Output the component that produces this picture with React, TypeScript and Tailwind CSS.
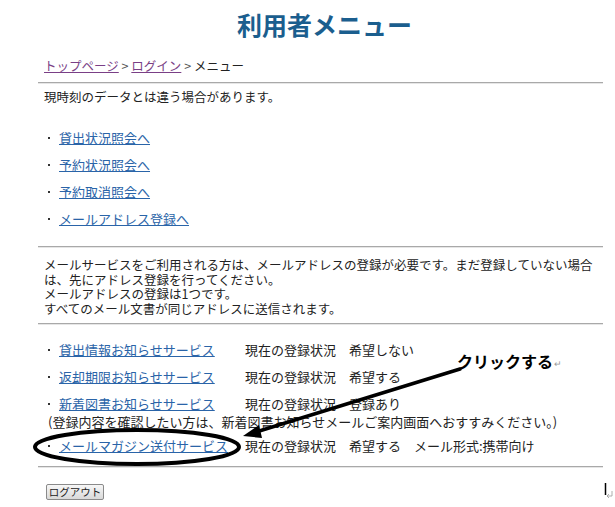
const font = { fontFamily: '"Noto Sans CJK JP", "Noto Sans", sans-serif' }

const menuLinks = ['貸出状況照会へ', '予約状況照会へ', '予約取消照会へ', 'メールアドレス登録へ']

const services = [
  { name: '貸出情報お知らせサービス', status: '現在の登録状況　希望しない' },
  { name: '返却期限お知らせサービス', status: '現在の登録状況　希望する' },
  { name: '新着図書お知らせサービス', status: '現在の登録状況　登録あり' },
]

function Rule() {
  return <div className="h-[2px] border-t border-[#a9a9a9] border-b border-b-[#e6e6e6]" />
}

function Bullet() {
  return (
    <span className="flex w-[11px] shrink-0 items-center">
      <span className="h-[2px] w-[2px] bg-[#333]" />
    </span>
  )
}

export default function App() {
  return (
    <div className="relative w-[615px] h-[507px] overflow-hidden bg-white text-[13px] text-[#222]" style={font}>
      <div className="ml-[38px] w-[565px]">
        {/* Title */}
        <h1 className="mt-[10px] h-[28px] pl-[8px] text-center text-[25px] leading-[28px] font-bold text-[#1b5e8e]">
          利用者メニュー
        </h1>

        {/* Breadcrumb */}
        <div className="mt-[19px] h-[18px] pl-[6px] leading-[18px] text-[12.5px]">
          <a className="text-[#7a3f86] underline">トップページ</a>
          <span className="text-[#555]"> &gt; </span>
          <a className="text-[#7a3f86] underline">ログイン</a>
          <span className="text-[#555]"> &gt; </span>
          <span>メニュー</span>
        </div>

        <div className="mt-[7px]">
          <Rule />
        </div>

        <p className="mt-[4px] h-[18px] pl-[6px] leading-[18px] text-[12.5px]">現時刻のデータとは違う場合があります。</p>

        {/* Menu links */}
        <ul className="mt-[18px] pl-[10px]">
          {menuLinks.map((label) => (
            <li key={label} className="flex h-[27px] items-center leading-[27px]">
              <Bullet />
              <a className="text-[#2a64a8] underline">{label}</a>
            </li>
          ))}
        </ul>

        <div className="mt-[14px]">
          <Rule />
        </div>

        <div className="mt-[10px] pl-[6px] text-[12.5px] whitespace-nowrap">
          <p className="h-[14.5px] leading-[14.5px]">
            メールサービスをご利用される方は、メールアドレスの登録が必要です。まだ登録していない場合
          </p>
          <p className="h-[14.5px] leading-[14.5px]">は、先にアドレス登録を行ってください。</p>
          <p className="h-[14.5px] leading-[14.5px]">メールアドレスの登録は1つです。</p>
          <p className="h-[14.5px] leading-[14.5px]">すべてのメール文書が同じアドレスに送信されます。</p>
        </div>

        <div className="mt-[7px]">
          <Rule />
        </div>

        {/* Services */}
        <div className="mt-[11px] pl-[10px]">
          {services.map((s) => (
            <div key={s.name} className="flex h-[27px] items-center">
              <Bullet />
              <a className="w-[186px] shrink-0 text-[#2a64a8] underline">{s.name}</a>
              <span>{s.status}</span>
            </div>
          ))}
          <p className="-mt-[2px] h-[14px] text-[13px] leading-[14px] whitespace-nowrap">
            (登録内容を確認したい方は、新着図書お知らせメールご案内画面へおすすみください。)
          </p>
          <div className="mt-[5px] flex h-[24px] items-center">
            <Bullet />
            <a className="w-[186px] shrink-0 text-[#2a64a8] underline">メールマガジン送付サービス</a>
            <span className="whitespace-nowrap">現在の登録状況　希望する　メール形式:携帯向け</span>
          </div>
        </div>

        <div className="mt-[8px]">
          <Rule />
        </div>

        <button className="mt-[16px] ml-[8px] flex h-[16px] w-[58px] items-center justify-center rounded-[2px] border border-[#8a8a8a] bg-gradient-to-b from-[#f7f7f7] to-[#d9d9d9] text-[10.5px] leading-none text-[#222]">
          ログアウト
        </button>
      </div>

      {/* Annotation overlay */}
      <svg className="pointer-events-none absolute inset-0" width="615" height="507">
        <line x1="460" y1="369" x2="256" y2="432" stroke="#000" strokeWidth="3.5" strokeLinecap="round" />
        <polygon points="243,436 259,425 262,438" fill="#000" />
        <ellipse cx="137" cy="447" rx="102" ry="17" fill="none" stroke="#000" strokeWidth="4" />
        <line x1="605.5" y1="483" x2="605.5" y2="495" stroke="#000" strokeWidth="1.5" />
        <path d="M612 491 v5 h-5 M609 494 l-2 2 l2 2" fill="none" stroke="#999" strokeWidth="0.8" />
      </svg>
      <div className="absolute left-[457px] top-[351px] flex items-end text-[16px] leading-[20px] font-bold text-black">
        クリックする
        <span className="ml-[1px] text-[9px] leading-[14px] font-normal text-[#999]">↵</span>
      </div>
    </div>
  )
}
